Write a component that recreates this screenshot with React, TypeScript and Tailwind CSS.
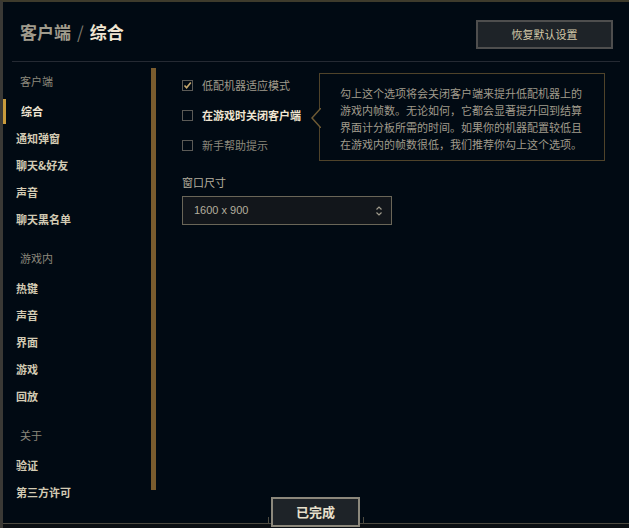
import React from "react";

const clientItems = ["通知弹窗", "聊天&好友", "声音", "聊天黑名单"];
const gameItems = ["热键", "声音", "界面", "游戏", "回放"];
const aboutItems = ["验证", "第三方许可"];

function SectionTitle({ label, first }: { label: string; first?: boolean }) {
  return (
    <div className={`h-[27px] flex items-center pl-[17px] text-[11px] text-[#8c887c] ${first ? "" : "mt-3"}`}>
      {label}
    </div>
  );
}

function NavItem({ label, active, gap }: { label: string; active?: boolean; gap?: boolean }) {
  return (
    <div className={`relative h-[27px] flex items-center text-[11px] font-bold ${gap ? "mt-[3px]" : ""} ${active ? "pl-[18px] text-[#f0e6d2]" : "pl-[13px] text-[#d3cbb3]"}`}>
      {active && <div className="absolute left-0 top-[1px] h-[25px] w-[3px] bg-[#c89b3c]" />}
      {label}
    </div>
  );
}

function Checkbox({ checked, label, hover, dim }: { checked?: boolean; label: string; hover?: boolean; dim?: boolean }) {
  return (
    <div className="h-[30px] flex items-center gap-[9px]">
      <div className="w-[11px] h-[11px] border border-[#5b5a56] bg-[#010a13] flex items-center justify-center">
        {checked && (
          <svg width="9" height="9" viewBox="0 0 9 9">
            <path d="M1.5 4.5 L3.6 6.8 L7.8 1.4" fill="none" stroke="#c8aa6e" strokeWidth="1.6" />
          </svg>
        )}
      </div>
      <span className={`text-[11px] ${hover ? "font-bold text-[#f0e6d2]" : dim ? "text-[#8c887c]" : "text-[#a09b8c]"}`}>{label}</span>
    </div>
  );
}

export default function App() {
  return (
    <div className="relative w-[629px] h-[528px] overflow-hidden bg-[#010a13] border-t-2 border-t-[#3e3b2c] border-l-[3px] border-l-[#3a3935] flex flex-col font-['Noto_Sans_CJK_SC','Liberation_Sans',sans-serif]">
      {/* Header */}
      <div className="h-[60px] shrink-0 ml-[9px] mr-[9px] border-b border-[#252a33] flex items-center justify-between pl-[8px] pr-[7px]">
        <div className="text-[17px] font-bold flex items-center gap-[6px]">
          <span className="text-[#a09b8c]">客户端</span>
          <span className="text-[#7e7a6f] font-normal">/</span>
          <span className="text-[#f0e6d2]">综合</span>
        </div>
        <button className="w-[137px] h-[29px] mt-[5px] bg-[#1e2328] border-2 border-[#4e4e4e] text-[11px] text-[#d4c9a8] flex items-center justify-center">
          恢复默认设置
        </button>
      </div>

      {/* Body */}
      <div className="flex flex-1">
        <div className="w-[148px] pt-[6px] flex flex-col">
          <SectionTitle label="客户端" first />
          <NavItem label="综合" active gap />
          {clientItems.map((l) => (
            <NavItem key={l} label={l} />
          ))}
          <SectionTitle label="游戏内" />
          <NavItem label={gameItems[0]} gap />
          {gameItems.slice(1).map((l) => (
            <NavItem key={l} label={l} />
          ))}
          <SectionTitle label="关于" />
          <NavItem label={aboutItems[0]} gap />
          <NavItem label={aboutItems[1]} />
        </div>

        <div className="w-[5px] h-[422px] mt-[6px] bg-[#7a5c2e]" />

        <div className="flex-1 pl-[26px] pt-[8px] flex flex-col">
          <Checkbox checked label="低配机器适应模式" />
          <Checkbox hover label="在游戏时关闭客户端" />
          <Checkbox dim label="新手帮助提示" />
          <div className="mt-[14px] h-[16px] flex items-center text-[11px] text-[#b4ae9e]">窗口尺寸</div>
          <div className="mt-[6px] w-[210px] h-[29px] border border-[#6a6658] bg-[#12161b] flex items-center justify-between pl-[11px] pr-[8px]">
            <span className="text-[11px] text-[#b4ae9e] font-['Liberation_Sans',sans-serif]">1600 x 900</span>
            <svg width="8" height="12" viewBox="0 0 8 12">
              <path d="M1.5 4.5 L4 2 L6.5 4.5 M1.5 7.5 L4 10 L6.5 7.5" fill="none" stroke="#a09b8c" strokeWidth="1.2" />
            </svg>
          </div>
        </div>
      </div>

      {/* Tooltip */}
      <div className="absolute left-[316px] top-[71px] w-[286px] h-[88px] bg-[#010a13] border border-[#4f432a] px-[20px] pt-[3px] flex flex-col justify-center text-[11px] leading-[17px] text-[#a09b8c]">
        <span>勾上这个选项将会关闭客户端来提升低配机器上的</span>
        <span>游戏内帧数。无论如何，它都会显著提升回到结算</span>
        <span>界面计分板所需的时间。如果你的机器配置较低且</span>
        <span>在游戏内的帧数很低，我们推荐你勾上这个选项。</span>
        <svg className="absolute left-[-9px] top-[34px]" width="10" height="20" viewBox="0 0 10 20">
          <path d="M10 0 L1 10 L10 20" fill="#010a13" stroke="#6e5a34" strokeWidth="1.5" />
        </svg>
      </div>

      {/* Bottom frame */}
      <div className="absolute left-0 right-0 bottom-0 h-[5px] border-t border-[#4d4b42] bg-[#0b0f13]" />
      <div className="absolute left-[265px] bottom-[5px] w-[96px] h-[6px] border-l border-r border-[#4d4b42]" />
      <button className="absolute left-[268px] top-[495px] w-[89px] h-[30px] bg-[#1e2328] border-2 border-[#8c887c] text-[13px] font-bold text-[#e8e0cc] flex items-center justify-center">
        已完成
      </button>
    </div>
  );
}
